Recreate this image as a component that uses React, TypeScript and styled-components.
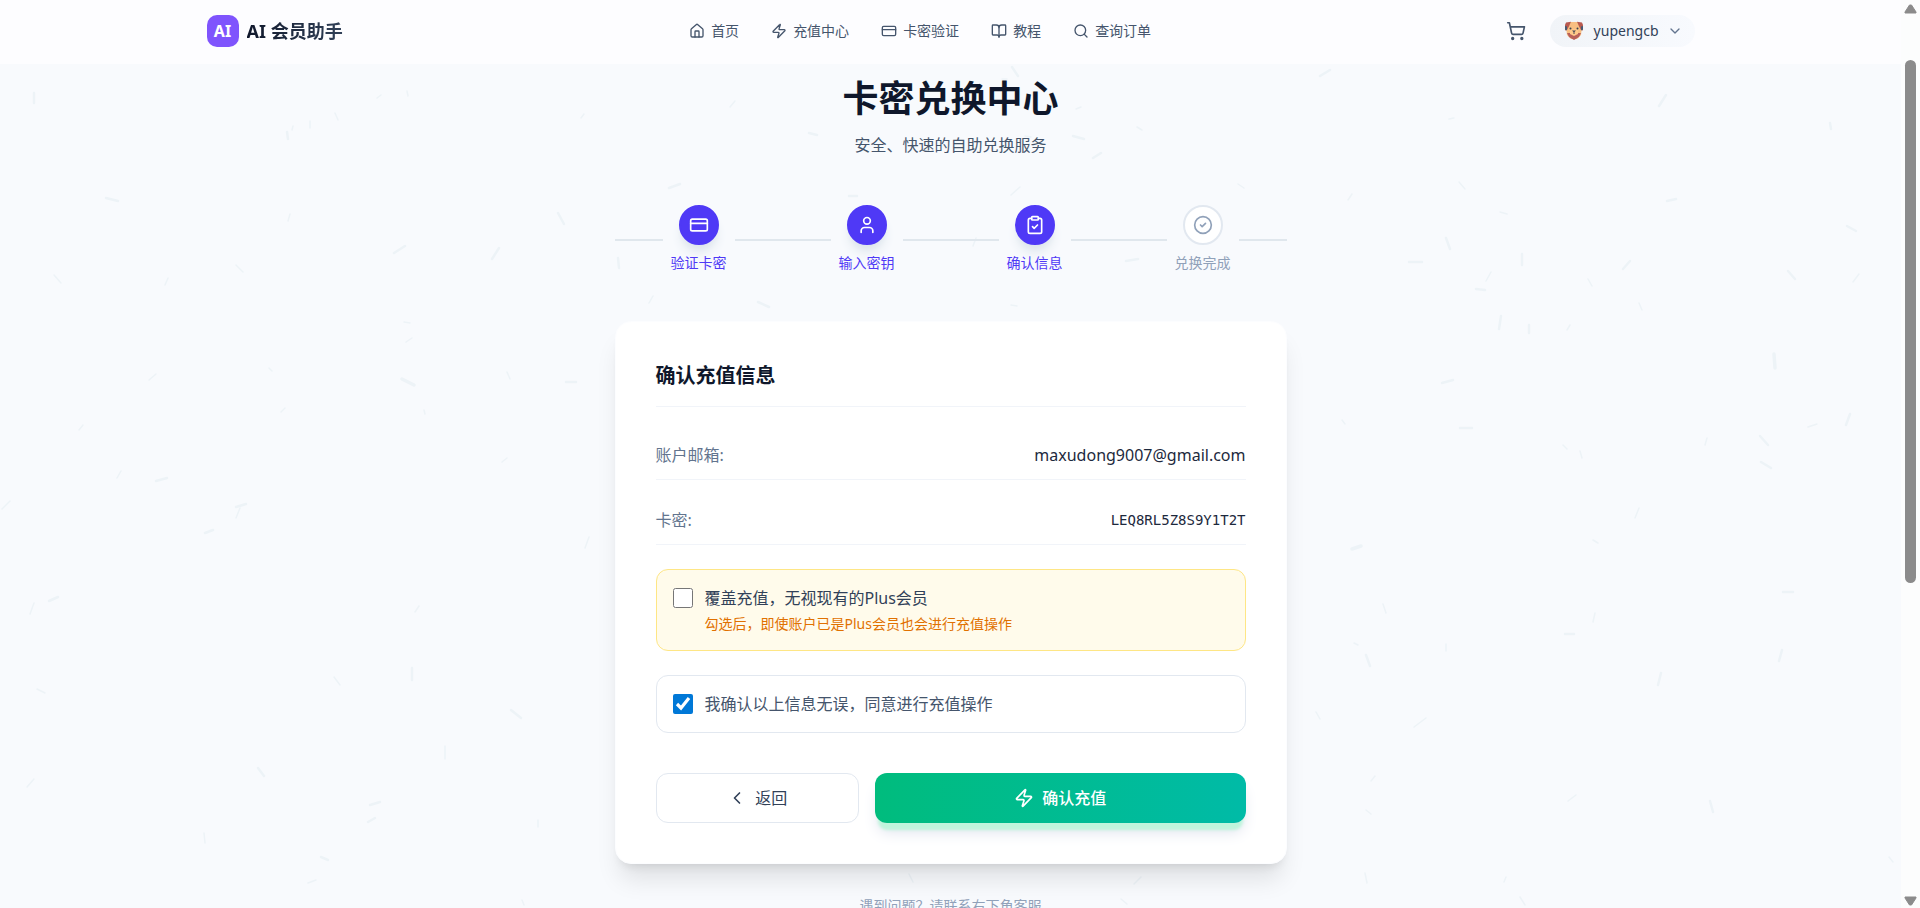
import React from "react";
import styled, { createGlobalStyle, css } from "styled-components";
import {
  BookOpen,
  ChevronDown,
  ChevronLeft,
  CircleCheck,
  ClipboardCheck,
  CreditCard,
  House,
  Search,
  ShoppingCart,
  User,
  Zap,
} from "lucide-react";

const sans = `"Noto Sans", "Noto Sans CJK SC", sans-serif`;

const GlobalStyle = createGlobalStyle`
  *, *::before, *::after { box-sizing: border-box; }
  body {
    margin: 0;
    background: #f8fafd;
    color: #0f172b;
    font-family: ${sans};
    font-size: 16px;
    line-height: 24px;
  }
  h1, h2, p, dl, dd, dt, ol { margin: 0; padding: 0; }
  button { font: inherit; cursor: pointer; }
`;

const Viewport = styled.div`
  display: flex;
  height: 100vh;
  overflow: hidden;
`;

const Page = styled.div`
  position: relative;
  flex: 1;
  min-width: 0;
  overflow: hidden;
`;

const Particles = styled.svg`
  position: absolute;
  inset: 0;
  width: 100%;
  height: 100%;
  stroke: #edf3f7;
  stroke-linecap: round;
  pointer-events: none;
`;

const Header = styled.header`
  position: relative;
  background: #fdfdff;
`;

const HeaderInner = styled.div`
  display: flex;
  align-items: center;
  justify-content: space-between;
  height: 64px;
  max-width: 1536px;
  margin: 0 auto;
  padding: 0 24px 2px;
`;

const Brand = styled.a`
  display: flex;
  align-items: center;
  gap: 8px;
  text-decoration: none;
`;

const BrandMark = styled.span`
  display: grid;
  place-items: center;
  width: 32px;
  height: 32px;
  border-radius: 10px;
  background: #7f54fd;
  color: #fff;
  font-size: 16px;
  font-weight: 700;
`;

const BrandName = styled.span`
  color: transparent;
  background: linear-gradient(90deg, #0f172b, #314158);
  background-clip: text;
  font-size: 18px;
  line-height: 28px;
  font-weight: 700;
`;

const Nav = styled.nav`
  display: flex;
  gap: 32px;
`;

const NavLink = styled.a`
  display: flex;
  align-items: center;
  gap: 6px;
  color: #45556c;
  font-size: 14px;
  line-height: 20px;
  text-decoration: none;
`;

const HeaderActions = styled.div`
  display: flex;
  align-items: center;
  gap: 16px;
`;

const CartButton = styled.button`
  display: flex;
  padding: 8px;
  border: 0;
  background: none;
  color: #45556c;
`;

const UserButton = styled.button`
  display: flex;
  align-items: center;
  gap: 8px;
  height: 32px;
  padding: 0 12px;
  border: 0;
  border-radius: 16px;
  background: linear-gradient(90deg, #f1f4f8, #f8fafe);
  color: #314158;
  font-size: 14px;
  line-height: 20px;
`;

const Avatar = styled.svg`
  width: 24px;
  height: 24px;
`;

const Main = styled.main`
  position: relative;
  max-width: 672px;
  margin: 0 auto;
  padding-top: 15px;
`;

const Title = styled.h1`
  font-size: 36px;
  line-height: 40px;
  font-weight: 700;
  text-align: center;
`;

const Subtitle = styled.p`
  margin-top: 14px;
  color: #45556c;
  text-align: center;
`;

const Steps = styled.ol`
  position: relative;
  display: grid;
  grid-template-columns: repeat(4, 1fr);
  justify-items: center;
  margin-top: 48px;
  list-style: none;

  &::before {
    content: "";
    position: absolute;
    left: 0;
    right: 0;
    top: 50%;
    height: 2px;
    background: #e0e7ed;
  }
`;

const Step = styled.li<{ $reached: boolean }>`
  position: relative;
  display: flex;
  flex-direction: column;
  align-items: center;
  gap: 8px;
  padding: 0 8px;
  background: #f8fafd;
  color: ${(p) => (p.$reached ? "#4f39f6" : "#90a1b9")};
  font-size: 14px;
  line-height: 20px;
`;

const StepCircle = styled.span<{ $reached: boolean }>`
  display: grid;
  place-items: center;
  width: 40px;
  height: 40px;
  border: 2px solid #e2e8f0;
  border-radius: 50%;
  background: #fff;
  ${(p) =>
    p.$reached &&
    css`
      border-color: #4f39f6;
      background: #4f39f6;
      color: #fff;
      box-shadow: 0 10px 12px -3px #dde5ec, 0 5px 6px -4px #dde5ec;
    `}
`;

const Card = styled.section`
  margin-top: 48px;
  padding: 40px;
  border: 1px solid #fcfdff;
  border-radius: 16px;
  background: #fff;
  box-shadow: 0 20px 25px -5px rgba(0, 0, 0, 0.1),
    0 8px 10px -6px rgba(0, 0, 0, 0.1);
`;

const CardTitle = styled.h2`
  margin-bottom: 24px;
  padding-bottom: 16px;
  border-bottom: 1px solid #f1f4f9;
  font-size: 20px;
  line-height: 28px;
  font-weight: 700;
`;

const Details = styled.dl`
  display: flex;
  flex-direction: column;
  gap: 16px;
`;

const DetailRow = styled.div`
  display: flex;
  align-items: center;
  justify-content: space-between;
  padding: 12px 0;
  border-bottom: 1px solid #f1f4f9;
`;

const DetailLabel = styled.dt`
  color: #62748e;
`;

const DetailValue = styled.dd<{ $code?: boolean }>`
  color: #1d293d;
  ${(p) =>
    p.$code &&
    css`
      font-family: "DejaVu Sans Mono", monospace;
      font-size: 14px;
    `}
`;

const CheckPanel = styled.label<{ $warning?: boolean }>`
  display: flex;
  align-items: flex-start;
  gap: 12px;
  margin-top: 24px;
  padding: 16px;
  border: 1px solid ${(p) => (p.$warning ? "#fee685" : "#e2e8f0")};
  border-radius: 12px;
  background: ${(p) => (p.$warning ? "#fffbeb" : "#fff")};
  color: ${(p) => (p.$warning ? "#314158" : "#45556c")};
  cursor: pointer;
`;

const Checkbox = styled.input`
  flex: none;
  width: 20px;
  height: 20px;
  margin: 2px 0 0;
  accent-color: #0078d7;
`;

const CheckText = styled.span`
  display: flex;
  flex-direction: column;
  gap: 4px;
`;

const CheckHint = styled.span`
  color: #e17100;
  font-size: 14px;
  line-height: 20px;
`;

const Actions = styled.div`
  display: flex;
  gap: 16px;
  margin-top: 40px;
`;

const ActionButton = styled.button<{ $primary?: boolean }>`
  display: flex;
  flex: 1;
  align-items: center;
  justify-content: center;
  gap: 8px;
  padding: 12px 16px;
  border: 1px solid #e2e8f0;
  border-radius: 12px;
  background: #fff;
  color: #314158;
  ${(p) =>
    p.$primary &&
    css`
      flex: 2;
      border: 0;
      background: linear-gradient(90deg, #00bc7d, #00bba7);
      color: #fff;
      font-weight: 500;
      box-shadow: 0 10px 3px -3px #bff5dc, 0 12px 15px -3px #dfe3ee;
    `}
`;

const HelpText = styled.p`
  margin-top: 32px;
  color: #90a1b9;
  font-size: 14px;
  line-height: 20px;
  text-align: center;
`;

const ScrollTrack = styled.div`
  display: flex;
  flex: none;
  flex-direction: column;
  align-items: center;
  width: 19px;
  padding: 4px 0 2px;
  background: #fcfdfd;
`;

const ScrollThumb = styled.span`
  width: 11px;
  height: 58%;
  margin: 46px 0 auto;
  border-radius: 6px;
  background: #8b8b8b;
`;

const navItems = [
  { label: "首页", Icon: House },
  { label: "充值中心", Icon: Zap },
  { label: "卡密验证", Icon: CreditCard },
  { label: "教程", Icon: BookOpen },
  { label: "查询订单", Icon: Search },
];

const steps = [
  { label: "验证卡密", Icon: CreditCard, reached: true },
  { label: "输入密钥", Icon: User, reached: true },
  { label: "确认信息", Icon: ClipboardCheck, reached: true },
  { label: "兑换完成", Icon: CircleCheck, reached: false },
];

// Floating dashes of the backdrop: x1, y1, x2, y2, stroke width.
const dashes: number[][] = [
  [34, 93, 34, 103, 2], [106, 198, 118, 201, 2], [287, 132, 288, 139, 2],
  [293, 126, 292, 130, 1], [310, 121, 310, 128, 1], [335, 113, 338, 120, 1],
  [377, 98, 381, 95, 1], [407, 91, 408, 96, 1], [581, 118, 584, 114, 1],
  [558, 213, 564, 224, 2], [394, 253, 405, 246, 2], [492, 259, 499, 248, 2],
  [290, 214, 288, 221, 1], [236, 265, 243, 272, 1], [54, 275, 61, 283, 1],
  [168, 278, 165, 285, 1], [404, 322, 410, 323, 1], [406, 342, 412, 338, 1],
  [149, 380, 156, 374, 1], [269, 368, 272, 371, 1], [402, 379, 414, 385, 3],
  [507, 372, 510, 379, 1], [566, 382, 576, 382, 2], [424, 410, 425, 414, 1],
  [281, 412, 285, 408, 1], [79, 430, 83, 425, 1], [117, 478, 121, 471, 1],
  [156, 481, 167, 478, 2], [502, 462, 507, 458, 1],
  [1012, 67, 1018, 76, 2], [1002, 79, 1007, 79, 1], [730, 107, 735, 101, 1],
  [809, 133, 817, 135, 2], [1076, 109, 1081, 107, 1], [1073, 136, 1084, 139, 2],
  [1093, 158, 1101, 153, 2], [1137, 127, 1142, 130, 1], [1025, 136, 1031, 137, 1],
  [669, 188, 680, 184, 2], [849, 196, 857, 196, 2], [1011, 195, 1020, 187, 1],
  [1238, 184, 1244, 188, 1], [618, 258, 619, 268, 2], [649, 303, 653, 296, 1],
  [758, 302, 769, 307, 2], [1011, 305, 1017, 306, 1], [1126, 261, 1138, 259, 2],
  [973, 246, 976, 238, 1],
  [1320, 76, 1330, 70, 2], [1449, 119, 1454, 118, 1], [1659, 106, 1666, 95, 2],
  [1830, 123, 1831, 129, 2], [1348, 200, 1352, 194, 1], [1459, 182, 1465, 189, 1],
  [1500, 212, 1507, 214, 1], [1667, 201, 1676, 199, 2], [1847, 226, 1856, 231, 2],
  [1446, 238, 1450, 249, 2], [1409, 262, 1422, 262, 2], [1522, 254, 1522, 265, 2],
  [1486, 281, 1491, 272, 1], [1476, 289, 1485, 290, 2], [1623, 269, 1630, 261, 2],
  [1588, 279, 1592, 286, 1], [1788, 271, 1795, 279, 2], [1853, 282, 1859, 274, 1],
  [1639, 303, 1642, 310, 1], [1499, 329, 1501, 316, 2], [1529, 325, 1529, 333, 2],
  [1567, 330, 1570, 325, 1], [1774, 354, 1775, 368, 3], [1442, 383, 1453, 380, 2],
  [1342, 420, 1345, 424, 1], [1460, 428, 1472, 428, 2], [1563, 445, 1567, 449, 1],
  [1580, 451, 1582, 458, 1], [1705, 445, 1707, 438, 1], [1808, 427, 1817, 424, 1],
  [1846, 425, 1850, 414, 2], [1760, 436, 1768, 445, 2], [1761, 462, 1771, 468, 2],
  [2, 509, 10, 501, 1], [236, 518, 240, 508, 1], [236, 507, 246, 504, 2],
  [205, 533, 213, 530, 2], [585, 548, 589, 537, 1], [49, 601, 58, 597, 2],
  [30, 614, 34, 603, 1], [415, 612, 419, 606, 1], [412, 668, 412, 680, 2],
  [334, 677, 340, 685, 1], [37, 689, 45, 693, 1], [511, 710, 521, 718, 2],
  [445, 746, 445, 759, 1], [258, 768, 264, 776, 2], [27, 787, 34, 779, 1],
  [370, 805, 380, 802, 2], [368, 822, 375, 818, 2], [538, 820, 538, 827, 1],
  [204, 833, 205, 843, 1], [321, 857, 328, 860, 2], [308, 883, 316, 880, 1],
  [522, 900, 524, 905, 1], [1635, 518, 1639, 508, 1], [1352, 549, 1361, 546, 3],
  [1593, 540, 1598, 543, 1], [1783, 592, 1793, 592, 2], [1383, 604, 1386, 613, 1],
  [1593, 622, 1595, 613, 1], [1565, 634, 1574, 634, 2], [1354, 643, 1358, 645, 1],
  [1366, 655, 1370, 666, 2], [1446, 644, 1446, 651, 1], [1779, 661, 1782, 650, 2],
  [1658, 685, 1661, 673, 2], [1316, 712, 1320, 719, 1], [1414, 727, 1426, 718, 1],
  [1371, 781, 1375, 776, 1], [1568, 801, 1576, 795, 1], [1366, 810, 1371, 814, 1],
  [1710, 801, 1713, 812, 2], [1365, 873, 1367, 883, 1], [1889, 857, 1893, 862, 1],
  [1504, 882, 1506, 877, 1], [1520, 897, 1525, 905, 1], [909, 874, 913, 882, 1],
  [1134, 884, 1141, 877, 1], [1121, 899, 1127, 904, 1],
];

function DogAvatar() {
  return (
    <Avatar viewBox="0 0 24 24" aria-hidden="true">
      <path d="M8 3h8l4 5-1 8-4 4h-6l-4-4-1-8z" fill="#f8bf82" />
      <path d="M4 3.500l5-.8-2 4.500L5 11l-2 .5V6z" fill="#b85a50" />
      <path d="M20 3.500l-5-.8 2 4.500 2 3.800 2 .5V6z" fill="#b85a50" />
      <path d="M3 7l2 .5v4L3 10.500zM21 7l-2 .5v4l2-1z" fill="#475a72" />
      <path d="M5 14h4l3 1.500 3-1.500h4l-2 4-5 3-5-3z" fill="#b9605a" />
      <path d="M8 11l4-1 4 1v4l-4 2-4-2z" fill="#ffc98a" />
      <circle cx="8.500" cy="9.500" r="1" fill="#37424f" />
      <circle cx="15.500" cy="9.500" r="1" fill="#37424f" />
      <path d="M10 11.500h4l-1.500 1.500v2h-1v-2z" fill="#4c4a52" />
    </Avatar>
  );
}

function ScrollArrow({ down }: { down?: boolean }) {
  return (
    <svg width="13" height="10" viewBox="0 0 13 10" aria-hidden="true">
      <path
        d={down ? "M1 1h11v1L7.500 9h-2L1 2z" : "M5.500 1h2L12 8v1H1V8z"}
        fill="#8b8b8b"
        stroke="#8b8b8b"
        strokeLinejoin="round"
      />
    </svg>
  );
}

export default function App() {
  return (
    <>
      <GlobalStyle />
      <Viewport>
        <Page>
          <Particles aria-hidden="true">
            {dashes.map(([x1, y1, x2, y2, w], i) => (
              <line key={i} x1={x1} y1={y1} x2={x2} y2={y2} strokeWidth={w + 0.5} />
            ))}
          </Particles>

          <Header>
            <HeaderInner>
              <Brand href="#">
                <BrandMark>AI</BrandMark>
                <BrandName>AI 会员助手</BrandName>
              </Brand>
              <Nav>
                {navItems.map(({ label, Icon }) => (
                  <NavLink href="#" key={label}>
                    <Icon size={16} />
                    {label}
                  </NavLink>
                ))}
              </Nav>
              <HeaderActions>
                <CartButton type="button" aria-label="购物车">
                  <ShoppingCart size={20} />
                </CartButton>
                <UserButton type="button">
                  <DogAvatar />
                  yupengcb
                  <ChevronDown size={16} color="#62748e" />
                </UserButton>
              </HeaderActions>
            </HeaderInner>
          </Header>

          <Main>
            <Title>卡密兑换中心</Title>
            <Subtitle>安全、快速的自助兑换服务</Subtitle>

            <Steps>
              {steps.map(({ label, Icon, reached }) => (
                <Step key={label} $reached={reached}>
                  <StepCircle $reached={reached}>
                    <Icon size={20} />
                  </StepCircle>
                  {label}
                </Step>
              ))}
            </Steps>

            <Card>
              <CardTitle>确认充值信息</CardTitle>
              <Details>
                <DetailRow>
                  <DetailLabel>账户邮箱:</DetailLabel>
                  <DetailValue>maxudong9007@gmail.com</DetailValue>
                </DetailRow>
                <DetailRow>
                  <DetailLabel>卡密:</DetailLabel>
                  <DetailValue $code>LEQ8RL5Z8S9Y1T2T</DetailValue>
                </DetailRow>
              </Details>

              <CheckPanel $warning>
                <Checkbox type="checkbox" />
                <CheckText>
                  覆盖充值，无视现有的Plus会员
                  <CheckHint>勾选后，即使账户已是Plus会员也会进行充值操作</CheckHint>
                </CheckText>
              </CheckPanel>
              <CheckPanel>
                <Checkbox type="checkbox" defaultChecked />
                <CheckText>我确认以上信息无误，同意进行充值操作</CheckText>
              </CheckPanel>

              <Actions>
                <ActionButton type="button">
                  <ChevronLeft size={20} />
                  返回
                </ActionButton>
                <ActionButton type="button" $primary>
                  <Zap size={20} />
                  确认充值
                </ActionButton>
              </Actions>
            </Card>

            <HelpText>遇到问题？请联系右下角客服</HelpText>
          </Main>
        </Page>

        <ScrollTrack aria-hidden="true">
          <ScrollArrow />
          <ScrollThumb />
          <ScrollArrow down />
        </ScrollTrack>
      </Viewport>
    </>
  );
}
